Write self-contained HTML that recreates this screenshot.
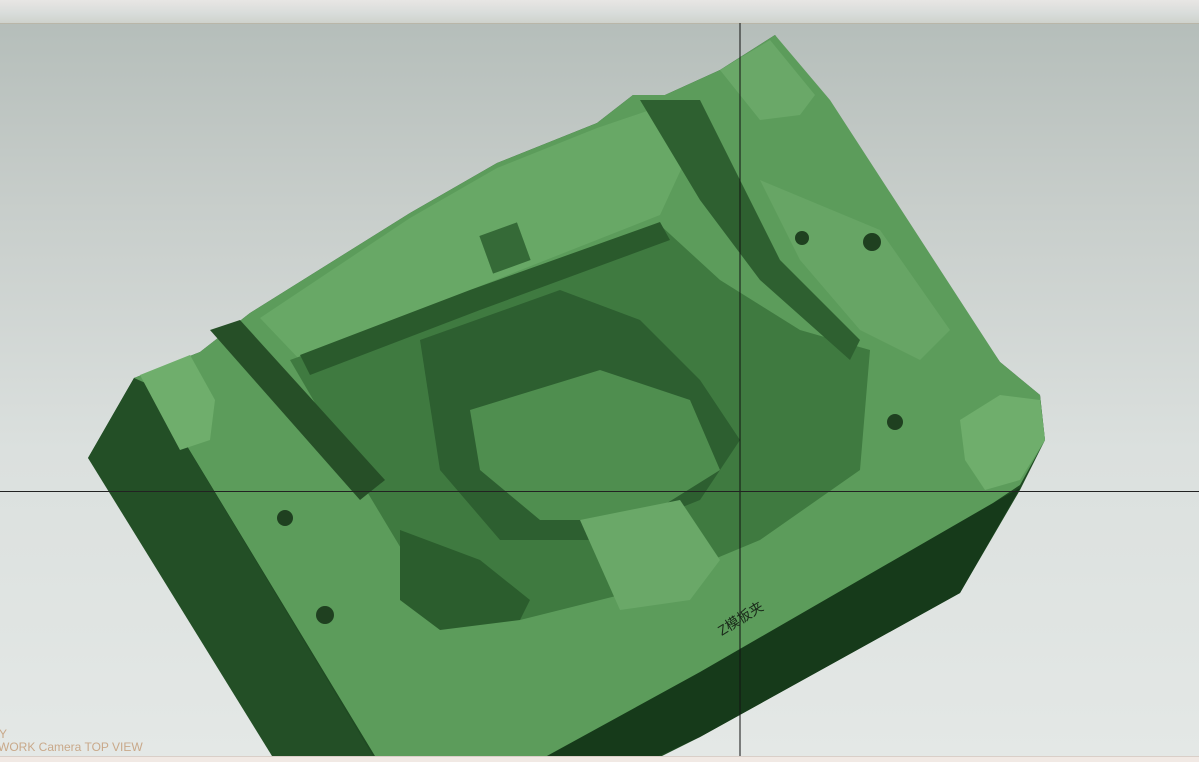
<!DOCTYPE html>
<html><head><meta charset="utf-8"><style>
html,body{margin:0;padding:0;width:1199px;height:762px;overflow:hidden}
body{background:linear-gradient(180deg,#b3bcb8 0px,#c7cdca 200px,#dbe0de 450px,#e4e8e6 762px);position:relative;font-family:"Liberation Sans",sans-serif}
.top{position:absolute;left:0;top:0;width:1199px;height:23px;background:linear-gradient(180deg,#e8e6e4,#d8dcda 60%,#cfd2cc);border-bottom:1px solid #b9b6a8}
.bot{position:absolute;left:0;top:756px;width:1199px;height:6px;background:#f1e9e4;border-top:1px solid #d9cfc8}
.t{position:absolute;color:#c9a98a;font-size:12px}
</style></head><body>
<div class="top"></div>
<svg width="1199" height="762" style="position:absolute;left:0;top:0">
<polygon fill="#1f4a22" points="88,458 134,378 200,352 250,313 410,213 497,163 597,123 633,95 665,95 720,70 775,35 1000,362 1040,395 1045,440 1020,490 960,593 700,737 650,762 370,762"/>
<polygon fill="#234f26" points="88,458 134,378 150,385 373,756 272,756"/>
<polygon fill="#163a1a" points="1020,488 993,503 700,672 540,760 650,760 700,737 960,593"/>
<polygon fill="#5c9c5b" points="134,378 200,352 250,313 410,213 497,163 597,123 633,95 665,95 720,70 775,35 830,100 1000,362 1040,395 1045,440 1020,485 993,503 700,672 545,757 375,756 150,385"/>
<polygon fill="#68a866" points="260,318 410,218 497,168 597,128 650,110 690,150 660,215 470,290 380,330 300,360"/>
<polygon fill="#3f7a40" points="290,360 470,295 660,225 720,280 800,330 870,350 860,470 760,540 640,590 520,620 420,580 360,480"/>
<polygon fill="#2a5a2c" points="300,355 470,290 660,222 670,240 480,310 310,375"/>
<polygon fill="#2d5f30" points="420,340 560,290 640,320 700,380 740,440 700,500 600,540 500,540 440,470"/>
<polygon fill="#4f8e4f" points="470,410 600,370 690,400 720,470 640,520 540,520 480,470"/>
<polygon fill="#67a565" points="760,180 880,230 950,330 920,360 860,330 800,260"/>
<polygon fill="#264f27" points="210,330 240,320 385,480 360,500"/>
<polygon fill="#2e6030" points="640,100 700,100 780,260 860,340 850,360 760,280 700,200"/>
<polygon fill="#6fae6c" points="140,375 190,355 215,400 210,440 180,450"/>
<polygon fill="#6fae6c" points="960,420 1000,395 1040,400 1045,440 1020,480 985,490 965,460"/>
<polygon fill="#6aa868" points="720,70 770,40 815,95 800,115 760,120"/>
<polygon fill="#2b5d2d" points="400,530 480,560 530,600 520,620 440,630 400,600"/>
<polygon fill="#6aa868" points="580,520 680,500 720,560 690,600 620,610"/>
<rect x="485" y="228" width="40" height="40" fill="#356a37" transform="rotate(-20 505 248)"/>
<circle cx="325" cy="615" r="9" fill="#1f4020"/><circle cx="872" cy="242" r="9" fill="#1f4020"/>
<circle cx="802" cy="238" r="7" fill="#1f4020"/><circle cx="895" cy="422" r="8" fill="#1f4020"/>
<circle cx="285" cy="518" r="8" fill="#1f4020"/>
<line x1="740" y1="23" x2="740" y2="756" stroke="#111" stroke-width="1"/>
<line x1="0" y1="491.5" x2="1199" y2="491.5" stroke="#222" stroke-width="1"/>
<text x="710" y="625" font-family="Liberation Sans,Noto Sans CJK SC,sans-serif" font-size="14" fill="#1a2a1a" transform="rotate(-32 735 610)">Z模板夹</text>
</svg>
<div class="t" style="left:-1px;top:727px">Y</div>
<div class="t" style="left:-2px;top:740px">WORK Camera TOP VIEW</div>
<div class="bot"></div>
</body></html>
